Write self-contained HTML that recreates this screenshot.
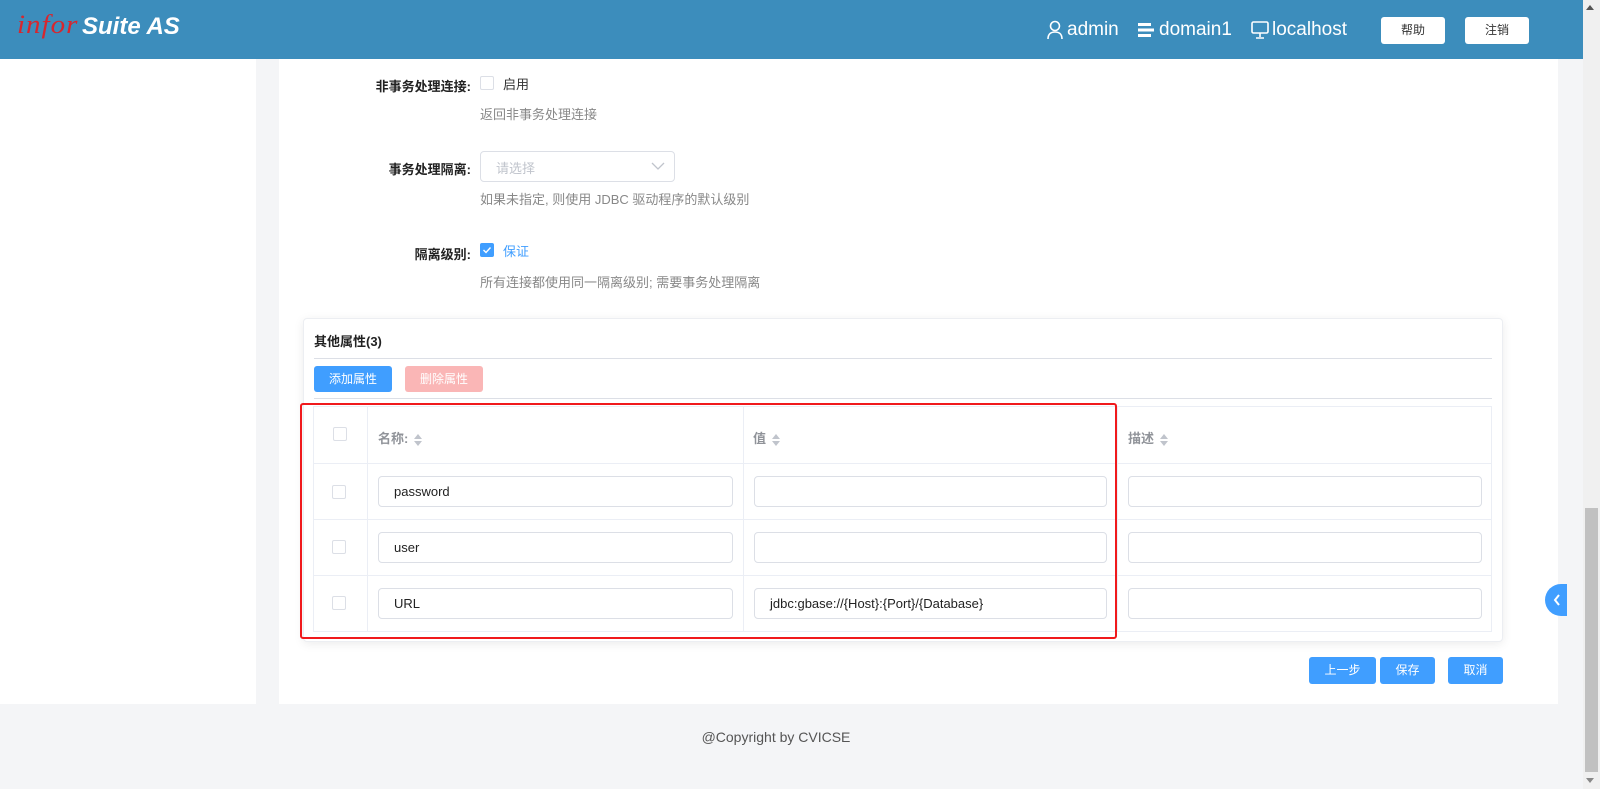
<!DOCTYPE html>
<html><head><meta charset="utf-8"><style>
*{box-sizing:border-box;margin:0;padding:0}
body{width:1600px;height:789px;overflow:hidden;background:#f4f5f7;font-family:"Liberation Sans","Noto Sans CJK SC",sans-serif;position:relative;font-size:13px;color:#333}
.a{position:absolute}
.hdr{left:0;top:0;width:1583px;height:59px;background:#3c8dbc}
.btnw{background:#fff;border-radius:3px;width:64px;height:27px;top:17px;font-size:12px;color:#333;text-align:center;line-height:27px}
.lbl{font-size:13px;font-weight:bold;color:#222;text-align:right;width:200px}
.hint{font-size:13px;color:#888}
.cb{width:14px;height:14px;border:1px solid #dcdfe6;border-radius:2px;background:#fff}
.inp{height:31px;border:1px solid #dcdfe6;border-radius:4px;background:#fff;padding-left:15px;line-height:29px;font-size:13px;color:#222}
.hl{background:#ebeef5}
.th{font-size:13px;font-weight:bold;color:#909399;top:428px}
.sort{display:inline-block;vertical-align:middle;margin-left:6px;width:8px;height:12px;position:relative}
.sort:before{content:"";position:absolute;top:0;left:0;border:4px solid transparent;border-bottom:5px solid #c0c4cc;border-top:0}
.sort:after{content:"";position:absolute;bottom:0;left:0;border:4px solid transparent;border-top:5px solid #c0c4cc;border-bottom:0}
.bb{background:#409eff;color:#fff;border-radius:3px;font-size:12px;text-align:center;height:27px;line-height:27px;top:657px}
</style></head><body>
<div class="a hdr"></div>
<div class="a" style="left:17px;top:9px;font-family:'Liberation Serif',serif;font-style:italic;color:#d7262e;font-size:29px;letter-spacing:1px;transform:scaleY(0.9)">infor</div>
<div class="a" style="left:82px;top:13px;font-style:italic;font-weight:bold;color:#fff;font-size:24px">Suite AS</div>
<svg class="a" style="left:1046px;top:20px" width="18" height="20" viewBox="0 0 18 20"><circle cx="9" cy="6" r="4.5" fill="none" stroke="#fff" stroke-width="1.6"/><path d="M2 19c0-5 3-7 7-7s7 2 7 7" fill="none" stroke="#fff" stroke-width="1.6"/></svg>
<div class="a" style="left:1067px;top:19px;color:#fff;font-size:19px">admin</div>
<svg class="a" style="left:1138px;top:23px" width="16" height="14"><rect x="0" y="0" width="13" height="3" fill="#fff"/><rect x="0" y="5.5" width="16" height="3" fill="#fff"/><rect x="0" y="11" width="13" height="3" fill="#fff"/></svg>
<div class="a" style="left:1159px;top:19px;color:#fff;font-size:19px">domain1</div>
<svg class="a" style="left:1251px;top:21px" width="18" height="18"><rect x="1" y="1" width="16" height="11" rx="1.5" fill="none" stroke="#fff" stroke-width="1.6"/><path d="M9 12v4M5 17h8" stroke="#fff" stroke-width="1.6"/></svg>
<div class="a" style="left:1272px;top:19px;color:#fff;font-size:19px">localhost</div>
<div class="a btnw" style="left:1381px">帮助</div>
<div class="a btnw" style="left:1465px">注销</div>
<div class="a" style="left:1583px;top:0;width:17px;height:789px;background:#f0f0f0"></div>
<div class="a" style="left:1585px;top:508px;width:13px;height:264px;background:#c1c1c1"></div>
<div class="a" style="left:1586px;top:5px;border:4px solid transparent;border-bottom:5px solid #555;border-top:0"></div>
<div class="a" style="left:1586px;top:778px;border:4px solid transparent;border-top:5px solid #888;border-bottom:0"></div>
<div class="a" style="left:0;top:59px;width:256px;height:645px;background:#fff"></div>
<div class="a" style="left:279px;top:59px;width:1279px;height:645px;background:#fff"></div>
<div class="a lbl" style="left:271px;top:76px">非事务处理连接:</div>
<div class="a cb" style="left:480px;top:76px"></div>
<div class="a" style="left:503px;top:74px;font-size:13px">启用</div>
<div class="a hint" style="left:480px;top:104px">返回非事务处理连接</div>
<div class="a lbl" style="left:271px;top:159px">事务处理隔离:</div>
<div class="a" style="left:480px;top:151px;width:195px;height:31px;border:1px solid #dcdfe6;border-radius:4px"></div>
<div class="a" style="left:496px;top:158px;color:#c0c4cc;font-size:13px">请选择</div>
<svg class="a" style="left:651px;top:161px" width="14" height="10"><path d="M1 2l6 6 6-6" fill="none" stroke="#c0c4cc" stroke-width="1.3"/></svg>
<div class="a hint" style="left:480px;top:189px">如果未指定, 则使用 JDBC 驱动程序的默认级别</div>
<div class="a lbl" style="left:271px;top:244px">隔离级别:</div>
<div class="a" style="left:480px;top:243px;width:14px;height:14px;background:#409eff;border-radius:2px"></div>
<svg class="a" style="left:480px;top:243px" width="14" height="14"><path d="M3.5 7l2.5 2.5 4.5-5" fill="none" stroke="#fff" stroke-width="1.4"/></svg>
<div class="a" style="left:503px;top:241px;color:#409eff;font-size:13px">保证</div>
<div class="a hint" style="left:480px;top:272px">所有连接都使用同一隔离级别; 需要事务处理隔离</div>
<div class="a" style="left:303px;top:318px;width:1200px;height:324px;background:#fff;border:1px solid #eceef2;border-radius:4px;box-shadow:0 2px 10px rgba(0,0,0,.08)"></div>
<div class="a" style="left:314px;top:331px;font-weight:bold;font-size:13px;color:#222">其他属性(3)</div>
<div class="a hl" style="left:314px;top:358px;width:1178px;height:1px;background:#dcdfe6"></div>
<div class="a" style="left:314px;top:366px;width:78px;height:26px;background:#409eff;border-radius:3px;color:#fff;font-size:12px;text-align:center;line-height:26px">添加属性</div>
<div class="a" style="left:405px;top:366px;width:78px;height:26px;background:#fab6b6;border-radius:3px;color:#fff;font-size:12px;text-align:center;line-height:26px">删除属性</div>
<div class="a" style="left:314px;top:398px;width:1178px;height:1px;background:#dcdfe6"></div>
<div class="a" style="left:313px;top:406px;width:1179px;height:226px;border:1px solid #ebeef5"></div>
<div class="a hl" style="left:313px;top:463px;width:1179px;height:1px"></div>
<div class="a hl" style="left:313px;top:519px;width:1179px;height:1px"></div>
<div class="a hl" style="left:313px;top:575px;width:1179px;height:1px"></div>
<div class="a hl" style="left:367px;top:406px;width:1px;height:226px"></div>
<div class="a hl" style="left:743px;top:406px;width:1px;height:226px"></div>
<div class="a hl" style="left:1117px;top:406px;width:1px;height:226px"></div>
<div class="a cb" style="left:333px;top:427px"></div>
<div class="a th" style="left:378px">名称:<span class="sort"></span></div>
<div class="a th" style="left:753px">值<span class="sort"></span></div>
<div class="a th" style="left:1128px">描述<span class="sort"></span></div>
<div class="a cb" style="left:332px;top:485px"></div>
<div class="a cb" style="left:332px;top:540px"></div>
<div class="a cb" style="left:332px;top:596px"></div>
<div class="a inp" style="left:378px;top:476px;width:355px">password</div>
<div class="a inp" style="left:754px;top:476px;width:353px"></div>
<div class="a inp" style="left:1128px;top:476px;width:354px"></div>
<div class="a inp" style="left:378px;top:532px;width:355px">user</div>
<div class="a inp" style="left:754px;top:532px;width:353px"></div>
<div class="a inp" style="left:1128px;top:532px;width:354px"></div>
<div class="a inp" style="left:378px;top:588px;width:355px">URL</div>
<div class="a inp" style="left:754px;top:588px;width:353px">jdbc:gbase://{Host}:{Port}/{Database}</div>
<div class="a inp" style="left:1128px;top:588px;width:354px"></div>
<div class="a" style="left:300px;top:403px;width:817px;height:236px;border:2px solid #f0191c;border-radius:3px"></div>
<div class="a bb" style="left:1309px;width:67px">上一步</div>
<div class="a bb" style="left:1380px;width:55px">保存</div>
<div class="a bb" style="left:1448px;width:55px">取消</div>
<div class="a" style="left:1545px;top:584px;width:22px;height:32px;background:#409eff;border-radius:16px 0 0 16px"></div>
<svg class="a" style="left:1552px;top:593px" width="10" height="14"><path d="M7 2l-4 5 4 5" fill="none" stroke="#fff" stroke-width="2"/></svg>
<div class="a" style="left:0;top:729px;width:1552px;text-align:center;font-size:14px;color:#555">@Copyright by CVICSE</div>
</body></html>
